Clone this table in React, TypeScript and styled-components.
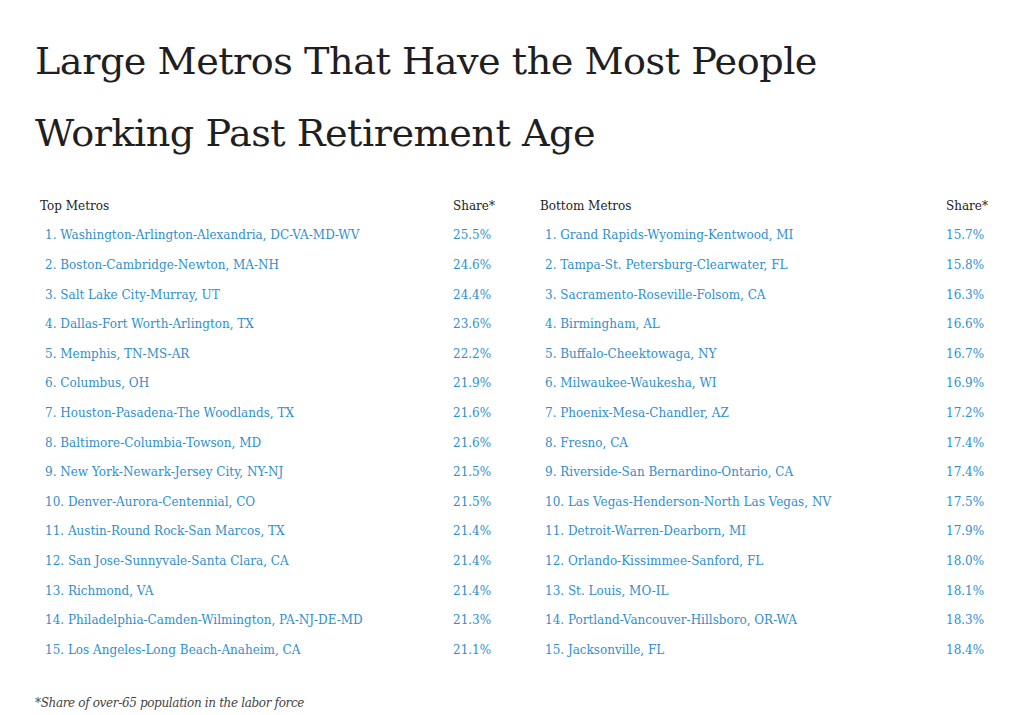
import React from "react";
import styled, { createGlobalStyle } from "styled-components";

const Global = createGlobalStyle`
  html, body { margin: 0; padding: 0; background: #ffffff; }
  body { font-family: "DejaVu Serif", "Liberation Serif", serif; color: #222; }
`;

const Page = styled.div`
  width: 1024px;
  height: 715px;
  box-sizing: border-box;
  padding: 25px 0 0 35px;
  overflow: hidden;
`;

const Title = styled.h1`
  margin: 0;
  font-family: "DejaVu Serif", serif;
  font-weight: 400;
  font-size: 38.2px;
  line-height: 72px;
  letter-spacing: -0.5px;
  color: #1f1f1f;
  width: 900px;
`;

const Tables = styled.div`
  display: flex;
  gap: 35px;
  margin-top: 22px;
`;

const Table = styled.div<{ $name: number; $share: number }>`
  display: grid;
  grid-template-columns: ${(p) => p.$name}px ${(p) => p.$share}px;
  grid-auto-rows: 29.6px;
  align-items: center;
  font-size: 12px;
`;

const Head = styled.div`
  padding-left: 5px;
  color: #222;
`;

const Cell = styled.div<{ $indent?: boolean }>`
  padding-left: ${(p) => (p.$indent ? 10 : 5)}px;
  color: #2f8fcb;
  white-space: nowrap;
`;

const Note = styled.p`
  margin: 31px 0 0 0;
  font-style: italic;
  font-size: 12px;
  letter-spacing: -0.35px;
  color: #444;
`;

const top: [string, string][] = [
  ["Washington-Arlington-Alexandria, DC-VA-MD-WV", "25.5%"],
  ["Boston-Cambridge-Newton, MA-NH", "24.6%"],
  ["Salt Lake City-Murray, UT", "24.4%"],
  ["Dallas-Fort Worth-Arlington, TX", "23.6%"],
  ["Memphis, TN-MS-AR", "22.2%"],
  ["Columbus, OH", "21.9%"],
  ["Houston-Pasadena-The Woodlands, TX", "21.6%"],
  ["Baltimore-Columbia-Towson, MD", "21.6%"],
  ["New York-Newark-Jersey City, NY-NJ", "21.5%"],
  ["Denver-Aurora-Centennial, CO", "21.5%"],
  ["Austin-Round Rock-San Marcos, TX", "21.4%"],
  ["San Jose-Sunnyvale-Santa Clara, CA", "21.4%"],
  ["Richmond, VA", "21.4%"],
  ["Philadelphia-Camden-Wilmington, PA-NJ-DE-MD", "21.3%"],
  ["Los Angeles-Long Beach-Anaheim, CA", "21.1%"],
];

const bottom: [string, string][] = [
  ["Grand Rapids-Wyoming-Kentwood, MI", "15.7%"],
  ["Tampa-St. Petersburg-Clearwater, FL", "15.8%"],
  ["Sacramento-Roseville-Folsom, CA", "16.3%"],
  ["Birmingham, AL", "16.6%"],
  ["Buffalo-Cheektowaga, NY", "16.7%"],
  ["Milwaukee-Waukesha, WI", "16.9%"],
  ["Phoenix-Mesa-Chandler, AZ", "17.2%"],
  ["Fresno, CA", "17.4%"],
  ["Riverside-San Bernardino-Ontario, CA", "17.4%"],
  ["Las Vegas-Henderson-North Las Vegas, NV", "17.5%"],
  ["Detroit-Warren-Dearborn, MI", "17.9%"],
  ["Orlando-Kissimmee-Sanford, FL", "18.0%"],
  ["St. Louis, MO-IL", "18.1%"],
  ["Portland-Vancouver-Hillsboro, OR-WA", "18.3%"],
  ["Jacksonville, FL", "18.4%"],
];

function MetroTable({ label, rows, name, share }: { label: string; rows: [string, string][]; name: number; share: number }) {
  return (
    <Table $name={name} $share={share}>
      <Head>{label}</Head>
      <Head>Share*</Head>
      {rows.map(([m, s], i) => (
        <React.Fragment key={m}>
          <Cell $indent>{`${i + 1}. ${m}`}</Cell>
          <Cell>{s}</Cell>
        </React.Fragment>
      ))}
    </Table>
  );
}

export default function App() {
  return (
    <Page>
      <Global />
      <Title>Large Metros That Have the Most People Working Past Retirement Age</Title>
      <Tables>
        <MetroTable label="Top Metros" rows={top} name={413} share={52} />
        <MetroTable label="Bottom Metros" rows={bottom} name={406} share={59} />
      </Tables>
      <Note>*Share of over-65 population in the labor force</Note>
    </Page>
  );
}
